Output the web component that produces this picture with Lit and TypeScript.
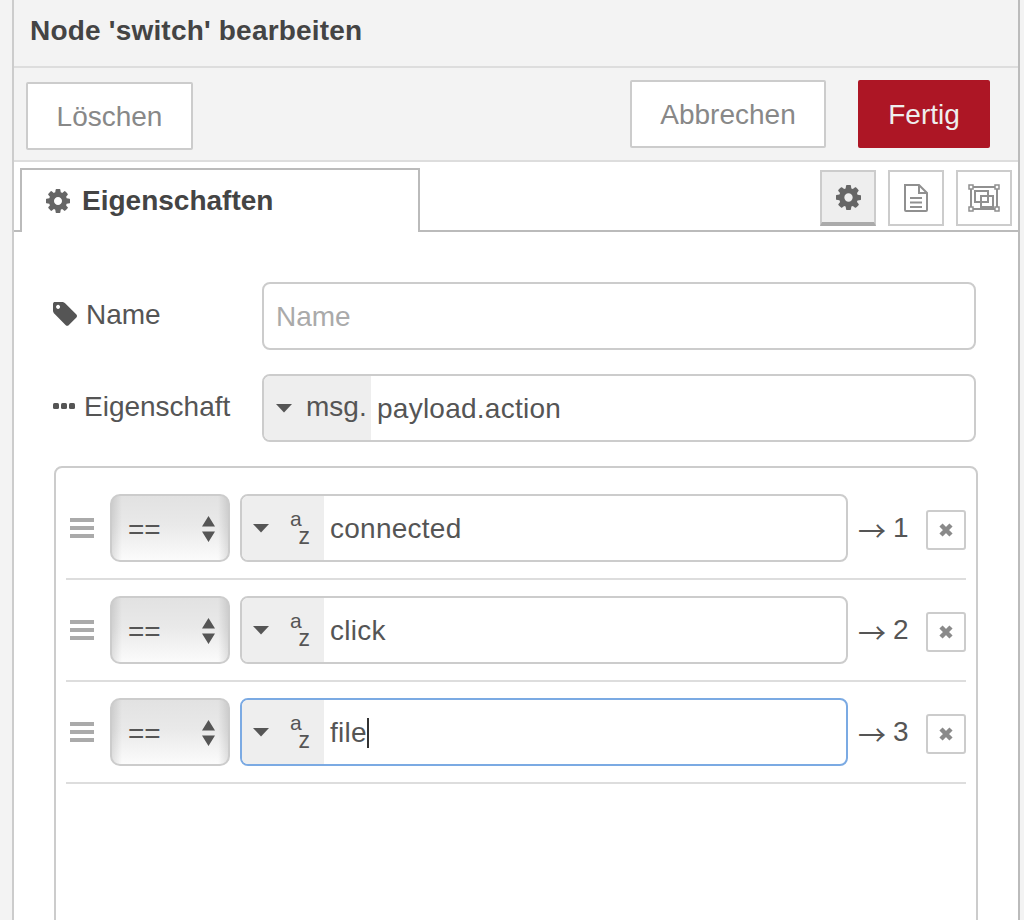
import { LitElement, html, css } from "lit";
import { customElement } from "lit/decorators.js";

const gear = (size: number, color: string) => html`<svg class="ico" width=${size} height=${size} viewBox="0 128 1536 1536" style="fill:${color}"><path d="M1024 896q0-106-75-181t-181-75-181 75-75 181 75 181 181 75 181-75 75-181zm512-109v222q0 12-8 23t-20 13l-185 28q-19 54-39 91 35 50 107 138 10 12 10 25t-9 23q-27 37-99 108t-94 71q-12 0-26-9l-138-108q-44 23-91 38-16 136-29 186-7 28-36 28h-222q-14 0-24.500-8.500t-11.500-21.500l-28-184q-49-16-90-37l-141 107q-10 9-25 9-14 0-25-11-126-114-165-168-7-10-7-23 0-12 8-23 15-21 51-66.500t54-70.500q-27-50-41-99l-183-27q-13-2-21-12.500t-8-23.500v-222q0-12 8-23t19-13l186-28q14-46 39-92-40-57-107-138-10-12-10-24 0-10 9-23 26-36 98.500-107.500t94.500-71.500q13 0 26 10l138 107q44-23 91-38 16-136 29-186 7-28 36-28h222q14 0 24.500 8.500t11.500 21.500l28 184q49 16 90 37l142-107q9-9 24-9 13 0 25 10 129 119 165 170 7 8 7 22 0 12-8 23-15 21-51 66.500t-54 70.500q26 50 41 98l183 28q13 2 21 12.500t8 23.500z"/></svg>`;

const caret = html`<svg class="caret" width="18" height="10" viewBox="0 0 18 10"><path d="M1 1h16l-8 8.500z" fill="#555"/></svg>`;

const typed = (value: string, focus: boolean) => html`
  <div class="input typed ${focus ? "focus" : ""}">
    <div class="type az">
      ${caret}
      <span class="azmark"><span class="a">a</span><span class="z">z</span></span>
    </div>
    <div class="val">${value}${focus ? html`<span class="cursor"></span>` : ""}</div>
  </div>`;

const row = (value: string, n: number, focus = false) => html`
  <div class="row">
    <div class="handle"><i></i><i></i><i></i></div>
    <div class="select">
      <span>==</span>
      <svg width="13" height="26" viewBox="0 0 13 26"><path d="M6.500 0L13 10.500H0zM0 15.500h13L6.500 26z" fill="#555"/></svg>
    </div>
    ${typed(value, focus)}
    <div class="out"><span class="arrow">→</span><span>${n}</span></div>
    <div class="del"><svg width="14" height="14" viewBox="0 0 14 14"><path d="M2 2l10 10M12 2L2 12" stroke="#8a8a8a" stroke-width="4.500"/></svg></div>
  </div>`;

@customElement("app-root")
export class AppRoot extends LitElement {
  static styles = css`
    :host { display: flex; width: 1024px; height: 920px; overflow: hidden; background: #f3f3f3;
      font-family: "Liberation Sans", Arial, sans-serif; font-size: 28px; color: #555; }
    * { box-sizing: border-box; }
    .ico { display: block; flex: none; }
    .dialog { margin-left: 12px; width: 1008px; height: 920px; flex: none; background: #fff;
      border-left: 2px solid #ccc; border-right: 2px solid #bbb; }
    .header { height: 68px; padding: 0 16px 4px; display: flex; align-items: center; background: #f3f3f3;
      border-bottom: 2px solid #ddd; font-weight: 700; color: #444; letter-spacing: .2px; }
    .toolbar { height: 94px; padding: 12px 28px 0 12px; display: flex; align-items: flex-start; gap: 32px;
      background: #f3f3f3; border-bottom: 2px solid #ddd; }
    .btn { height: 68px; padding-top: 2px; display: flex; align-items: center; justify-content: center; background: #fff;
      border: 2px solid #ccc; border-radius: 2px; color: #888; }
    .del-btn { width: 167px; margin-top: 2px; margin-right: auto; }
    .cancel { width: 196px; }
    .done { width: 132px; background: #ad1625; border-color: #ad1625; color: #eee; }
    .tabs { height: 70px; display: flex; align-items: flex-start; border-bottom: 2px solid #bbb; }
    .tab { margin: 6px 0 -2px 6px; width: 400px; height: 64px; padding: 0 0 0 24px; display: flex; align-items: center; gap: 12px;
      border: 2px solid #bbb; border-bottom: 0; background: #fff; font-weight: 700; color: #444; }
    .tool-icons { margin: 8px 6px 0 auto; display: flex; gap: 12px; }
    .tool { width: 56px; height: 56px; display: flex; align-items: center; justify-content: center; border: 2px solid #ccc; }
    .tool.on { background: #eee; border-bottom: 4px solid #aaa; }
    .body { padding: 50px 40px 0; }
    .frow { display: flex; align-items: center; height: 68px; margin-bottom: 24px; }
    .lab { width: 208px; display: flex; align-items: center; padding-bottom: 2px; }
    .lab svg { margin-left: -1px; margin-right: 9px; margin-bottom: 3px; }
    .input { height: 68px; border: 2px solid #ccc; border-radius: 8px; background: #fff; display: flex; overflow: hidden; }
    .wide { width: 714px; }
    .ph { padding: 2px 0 0 12px; display: flex; align-items: center; color: #aaa; }
    .type { background: #eee; display: flex; align-items: center; flex: none; }
    .msg { width: 107px; padding-left: 11px; gap: 13px; }
    .msg span { padding-bottom: 2px; }
    .val { display: flex; align-items: center; padding: 2px 0 0 6px; color: #555; letter-spacing: .25px; }
    .list { margin-top: 24px; width: 924px; height: 520px; border: 2px solid #ccc; border-radius: 8px; padding: 10px 10px 0; background: #fff; }
    .row { height: 102px; padding-top: 16px; display: flex; align-items: flex-start; border-bottom: 2px solid #ddd; }
    .handle { margin: 24px 0 0 4px; width: 24px; display: flex; flex-direction: column; gap: 4px; }
    .handle i { display: block; height: 4px; background: #aaa; }
    .select { margin-left: 16px; width: 120px; height: 68px; border: 2px solid #ccc; border-radius: 10px; flex: none;
      display: flex; align-items: center; justify-content: space-between; padding: 2px 13px 0 16px;
      background: linear-gradient(90deg, rgba(0,0,0,.1), transparent 10px, transparent calc(100% - 10px), rgba(0,0,0,.1)),
        linear-gradient(#e2e2e2, #e9e9e9 45%, #fbfbfb); color: #555; }
    .select span { padding-top: 2px; }
    .typed { margin-left: 10px; width: 608px; }
    .typed.focus { border-color: #7baae3; }
    .az { width: 82px; padding-left: 10px; padding-bottom: 0; gap: 20px; }
    .azmark { width: 20px; height: 34px; display: flex; justify-content: space-between; font-size: 21px; line-height: 22px; }
    .azmark .a { align-self: flex-start; margin-top: -3px; }
    .azmark .z { align-self: flex-end; margin-left: -4px; margin-bottom: -2px; font-size: 23px; }
    .cursor { display: block; width: 2px; height: 30px; background: #333; }
    .out { margin-left: 10px; width: 76px; padding-top: 18px; line-height: 32px; white-space: nowrap; display: flex; gap: 7px; }
    .arrow { padding-top: 2px; font-family: "Noto Sans CJK JP", "Liberation Sans", sans-serif; }
    .del { margin: 16px 0 0 -8px; width: 40px; height: 40px; border: 2px solid #ccc; border-radius: 3px; display: flex; align-items: center; justify-content: center; }
  `;

  render() {
    return html`
      <div class="dialog">
        <div class="header">Node 'switch' bearbeiten</div>
        <div class="toolbar">
          <div class="btn del-btn">Löschen</div>
          <div class="btn cancel">Abbrechen</div>
          <div class="btn done">Fertig</div>
        </div>
        <div class="tabs">
          <div class="tab">${gear(24, "#666")}<span>Eigenschaften</span></div>
          <div class="tool-icons">
            <div class="tool on">${gear(25, "#666")}</div>
            <div class="tool">
              <svg width="26" height="28" viewBox="0 0 26 28" fill="none" stroke="#909090" stroke-width="2"><path d="M2 1h14l8 8v17a1 1 0 0 1-1 1H3a1 1 0 0 1-1-1zM16 1v8h8M7 14h12M7 18.500h12M7 23h12"/></svg>
            </div>
            <div class="tool">
              <svg width="32" height="28" viewBox="0 0 32 28" fill="none" stroke="#909090" stroke-width="2"><path d="M3 5v18M29 5v18M5 3h22M5 25h22"/><path d="M1 1h4v4H1zM27 1h4v4h-4zM1 23h4v4H1zM27 23h4v4h-4z" stroke-width="1.500"/><path d="M7 7h13v11H7zM13 12h12v11H13z"/></svg>
            </div>
          </div>
        </div>
        <div class="body">
          <div class="frow">
            <div class="lab">
              <svg width="24" height="24" viewBox="128 192 1515 1414" fill="#555"><path d="M576 448q0-53-37.500-90.500t-90.500-37.500-90.500 37.500-37.500 90.500 37.500 90.500 90.500 37.500 90.500-37.500 37.500-90.500zm1067 576q0 53-37 90l-491 492q-39 37-91 37-53 0-90-37l-715-716q-38-37-64.500-101t-26.500-117v-416q0-52 38-90t90-38h416q53 0 117 26.500t102 64.500l715 714q37 39 37 91z"/></svg>
              <span>Name</span>
            </div>
            <div class="input wide ph">Name</div>
          </div>
          <div class="frow">
            <div class="lab">
              <svg width="22" height="6" viewBox="0 0 22 6" fill="#555"><rect width="6" height="6" rx="1.500"/><rect x="8" width="6" height="6" rx="1.500"/><rect x="16" width="6" height="6" rx="1.500"/></svg>
              <span>Eigenschaft</span>
            </div>
            <div class="input wide">
              <div class="type msg">${caret}<span>msg.</span></div>
              <div class="val">payload.action</div>
            </div>
          </div>
          <div class="list">
            ${row("connected", 1)}
            ${row("click", 2)}
            ${row("file", 3, true)}
          </div>
        </div>
      </div>
    `;
  }
}
